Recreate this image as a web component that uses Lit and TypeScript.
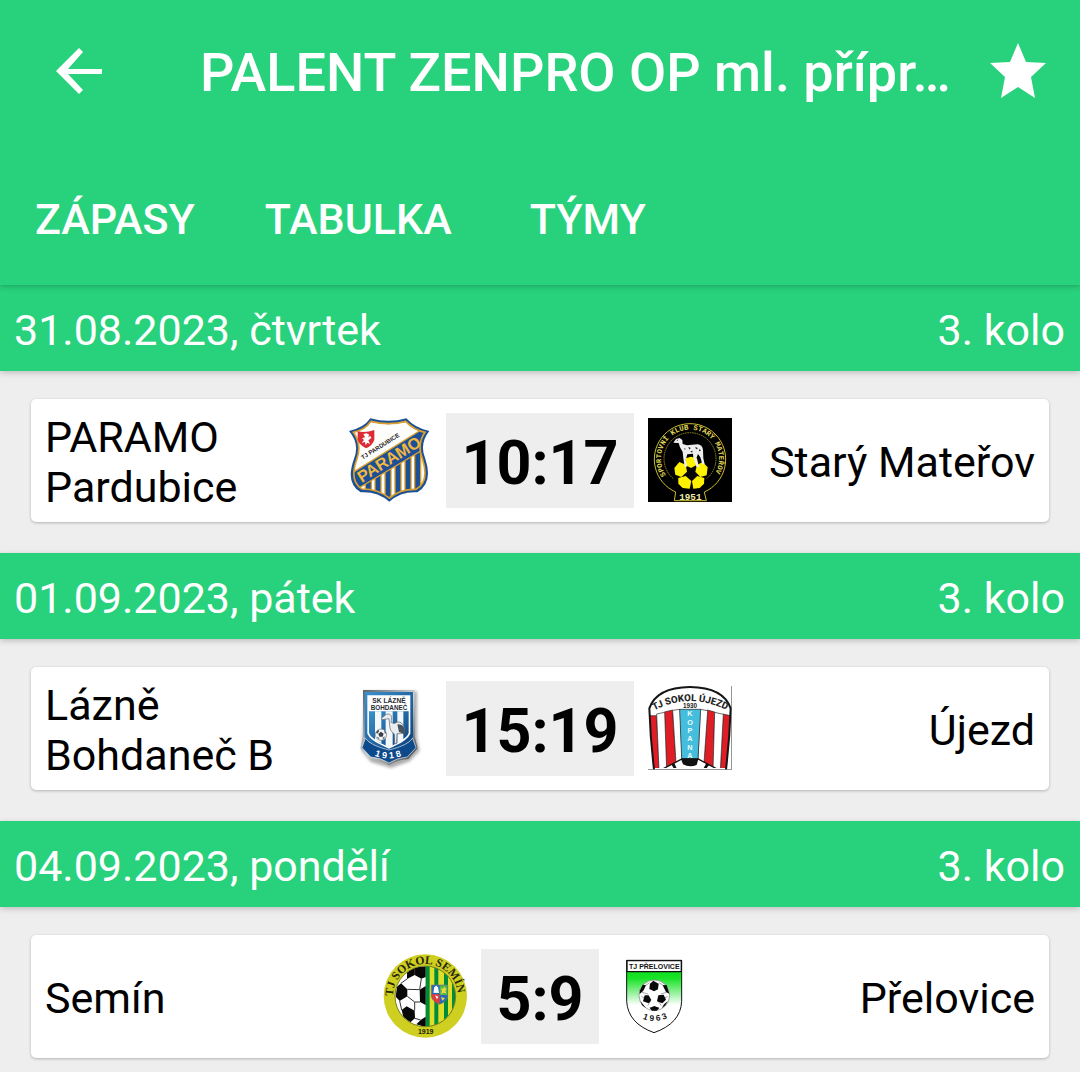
import { LitElement, html, svg, css, type SVGTemplateResult } from "lit";
import { customElement, property } from "lit/decorators.js";

interface Crest {
  viewBox: string;
  art: SVGTemplateResult;
}

interface Team {
  name: string;
  crest: Crest;
}

interface Match {
  date: string;
  round: string;
  home: Team;
  away: Team;
  score: string;
}

const paramo: Crest = {
  viewBox: "24 30 252 252",
  art: svg`
    <defs>
      <clipPath id="paramo-shield">
        <path d="M93 42Q146 55 197 42Q220 66 253 73Q229 110 248 155Q269 222 228 244Q180 243 148 270Q115 243 66 243Q27 220 50 155Q67 110 40 73Q75 66 93 42Z" />
      </clipPath>
    </defs>
    <path fill="#1d4f96" d="M91 31Q146 46 199 31Q225 60 268 69Q237 108 256 152Q280 226 232 253Q183 250 148 281Q112 250 62 253Q15 226 42 152Q60 108 27 69Q72 59 91 31Z" />
    <g clip-path="url(#paramo-shield)">
      <rect x="20" y="30" width="260" height="260" fill="#fdfdfb" />
      <path fill="#1d4f96" stroke="#d9a02f" stroke-width="4" d="M76 210h18v60h-18zM105 190h18v80h-18zM135 175h18v110h-18zM165 155h18v120h-18zM195 140h18v120h-18zM224 120h18v130h-18z" />
      <path fill="#1d4f96" stroke="#d9a02f" stroke-width="4" d="M36 195L256 58L258 120L40 250Z" />
    </g>
    <path fill="none" stroke="#d9a02f" stroke-width="5" d="M93 40Q146 54 197 40Q220 65 255 73Q229 110 248 155Q269 222 228 244Q180 243 148 270Q115 243 66 243Q27 220 50 155Q67 110 40 73Q75 66 93 40Z" />
    <path fill="#dc2b35" d="M53 70Q77 75 103 66V95Q98 112 78 121Q56 110 53 94Z" />
    <path fill="#fff" d="M70 78L80 76L88 80L84 87L91 84L94 90L85 97L90 108L82 104L77 112L75 102L65 104L72 96L66 91L75 88Z" />
    <text transform="translate(68 155) rotate(-32)" font-size="18" font-weight="700" fill="#222">TJ PARDUBICE</text>
    <text transform="translate(65 225) rotate(-32)" font-size="49" font-weight="900" fill="#f2b83c">PARAMO</text>
  `,
};

const materov: Crest = {
  viewBox: "24 30 252 252",
  art: svg`
    <rect x="24" y="30" width="252" height="252" fill="#000" />
    <path fill="none" stroke="#cabf2c" stroke-width="3" d="M107 252A107 107 0 1 1 193 252M107 252L103 278H199L193 252" />
    <path fill="none" stroke="#cabf2c" stroke-width="2" stroke-dasharray="5 2" d="M100 212A78 78 0 1 1 200 212" />
    <path id="materov-ring" fill="none" d="M79 202A87 87 0 1 1 221 202" />
    <text class="mono" font-size="22" font-weight="700" fill="#e0d85a"><textPath href="#materov-ring" startOffset="1">SPORTOVNÍ KLUB STARÝ MATEŘOV</textPath></text>
    <circle cx="153" cy="195" r="48" fill="#080808" />
    <g fill="#fff200">
      <path d="M153 146L171 151L174 169L153 180L134 170L137 151Z" />
      <path d="M103 180L118 162L137 170L141 191L124 207L106 200Z" />
      <path d="M203 178L188 162L171 171L166 191L181 207L200 202Z" />
      <path d="M115 210L137 204L154 219L149 242L128 240L115 227Z" />
      <path d="M193 210L172 204L156 219L160 242L179 240L192 227Z" />
    </g>
    <path fill="#eee" d="M100 104L108 93L119 90L127 96L128 108L141 112L172 109Q188 111 189 126L190 151L194 169L187 169L181 148L174 138L169 151L178 178L170 178L160 151L159 137L142 139L137 156L142 176L134 176L130 151L128 132L120 118L116 105Z" />
    <path fill="#222" d="M145 116l7 4-4 5zM166 116l8 5-6 3zM178 122l5 6-6 2zM151 130l7-2-2 6zM110 96l5-1-3 4zM132 121l5 1-2 4z" />
    <text class="mono" x="151" y="276" font-size="28" font-weight="700" text-anchor="middle" fill="#f1ecaa">1951</text>
  `,
};

const bohdanec: Crest = {
  viewBox: "9 30 252 252",
  art: svg`
    <defs>
      <linearGradient id="bohdanec-blue" x2="1" y2="1">
        <stop offset="0" stop-color="#3a91cc" />
        <stop offset="1" stop-color="#0b407d" />
      </linearGradient>
      <linearGradient id="bohdanec-rim" x2="1" y2="1">
        <stop offset="0" stop-color="#555e65" />
        <stop offset=".5" stop-color="#cbd0d3" />
        <stop offset="1" stop-color="#32393f" />
      </linearGradient>
      <filter id="bohdanec-shade"><feGaussianBlur stdDeviation="4" /></filter>
    </defs>
    <path fill="#777" opacity=".6" filter="url(#bohdanec-shade)" d="M60 46H216V185L224 225L194 256L138 276L78 258L50 225Z" />
    <path fill="url(#bohdanec-rim)" d="M54 42H209V181L218 217L190 249Q159 251 132 268Q106 251 74 249L46 217L54 181Z" />
    <path fill="url(#bohdanec-blue)" d="M59 48H204V181Q197 203 132 226Q66 203 59 181Z" />
    <path fill="#fff" d="M67 58H196V172Q190 194 132 218Q73 194 67 172Z" />
    <path fill="url(#bohdanec-blue)" d="M72 106H191V170Q185 190 132 212Q78 190 72 170Z" />
    <path fill="#f4f8fa" d="M90 106h19v96l-19-10zM122 106h21v103l-11 4-10-4zM157 106h18v86l-18 10z" />
    <text x="132" y="82" font-size="20" font-weight="700" text-anchor="middle" fill="#262c32">SK LÁZNĚ</text>
    <text x="132" y="101" font-size="19" font-weight="700" text-anchor="middle" fill="#262c32">BOHDANEČ</text>
    <path fill="#e9edef" stroke="#56616a" stroke-width="2" d="M109 127L124 115Q137 110 140 124L138 139Q146 146 158 138Q173 137 177 154L180 170L166 173L156 173L155 203H149L148 174Q134 165 134 148L132 128L111 131Z" />
    <path fill="#46525d" d="M157 145Q175 145 178 158L182 176L162 168Z" />
    <circle cx="108" cy="176" r="17" fill="#f6f6f6" stroke="#69747c" stroke-width="2" />
    <path fill="#38414a" d="M108 167l8 6-3 9h-10l-3-9zM93 170l6-8 4 2-6 9zM117 163l6 7-3 4zM95 183l5 1 4 7zM121 181l-6 8-3-3z" />
    <path fill="#0d4a8c" stroke="#dfe6ea" stroke-width="2" d="M61 187Q77 209 132 222Q187 209 203 187L213 215L187 243Q157 245 132 261Q107 245 77 243L51 215Z" />
    <path id="bohdanec-year" fill="none" d="M88 239Q132 257 180 236" />
    <text font-size="27" font-weight="700" fill="#fff"><textPath href="#bohdanec-year" startOffset="1">1 9 1 8</textPath></text>
  `,
};

const ujezd: Crest = {
  viewBox: "24 30 252 252",
  art: svg`
    <defs>
      <clipPath id="ujezd-shape">
        <path d="M42 276Q31 190 28 97Q50 34 150 33Q250 34 272 97Q269 190 258 276Z" />
      </clipPath>
    </defs>
    <rect x="24" y="30" width="252" height="252" fill="#fff" />
    <g clip-path="url(#ujezd-shape)">
      <rect x="24" y="30" width="252" height="252" fill="#fff" />
      <g stroke="#252525" stroke-width="2">
        <path fill="#e01d25" d="M27 119H50L58 282H32ZM73 108L98 102L108 258L79 282ZM202 102L224 108L220 282L192 258ZM249 114L275 120L264 282H241Z" />
        <path fill="#fff" d="M50 114L74 109L80 282H57ZM98 103L120 100L126 248L108 260ZM181 100L203 104L192 260L174 248ZM224 109L250 115L241 282H219Z" />
        <path fill="#45bddd" d="M119 100H182L174 248H125Z" />
      </g>
      <path fill="#fff" stroke="#111" stroke-width="4" d="M62 282L126 249H174L237 282Z" />
      <path fill="#111" d="M123 249H175L170 267Q148 275 129 265ZM94 265l9-4 9 21h-8zM199 262l9 4-13 17h-8z" />
    </g>
    <path fill="none" stroke="#151515" stroke-width="6" d="M42 280Q31 190 28 97Q50 34 150 33Q250 34 272 97Q269 190 258 280" />
    <path fill="none" stroke="#444" stroke-width="2" d="M275 30V281H24" />
    <path id="ujezd-arc" fill="none" d="M42 104Q150 46 264 104" />
    <text class="sans" font-size="29" font-weight="800" fill="#222"><textPath href="#ujezd-arc" startOffset="1">TJ SOKOL ÚJEZD</textPath></text>
    <text x="150" y="97" font-size="19" font-weight="800" text-anchor="middle" fill="#222">1930</text>
    <g font-size="22" font-weight="700" text-anchor="middle" fill="#e8fcff">
      <text x="150" y="121">K</text>
      <text x="150" y="146">O</text>
      <text x="150" y="171">P</text>
      <text x="150" y="196">A</text>
      <text x="150" y="221">N</text>
      <text x="150" y="246">A</text>
    </g>
  `,
};

const semin: Crest = {
  viewBox: "24 30 252 252",
  art: svg`
    <defs>
      <clipPath id="semin-disc"><circle cx="151" cy="157" r="90" /></clipPath>
    </defs>
    <circle cx="151" cy="156" r="125" fill="#cfcf22" />
    <g clip-path="url(#semin-disc)">
      <path fill="#fff" d="M60 60h92v190H60z" />
      <path fill="#008c3b" d="M152 60h92v190h-92z" />
      <path fill="#e1de29" d="M164 60h14v190h-14zM190 60h17v190h-17zM219 60h12v190h-12z" />
      <g fill="#080808">
        <path d="M96 82L121 70L152 67V99L139 104L119 93L96 105Z" />
        <path d="M66 128L78 118L97 136L97 157L74 171L62 158Z" />
        <path d="M134 137L152 126V183L135 174Z" />
        <path d="M80 198L95 187L119 200L120 223L106 235L85 220Z" />
        <path d="M137 228L152 218V250L124 241Z" />
      </g>
      <path fill="none" stroke="#333" stroke-width="3" d="M96 105L78 118M139 104L134 137L97 136M97 157L119 174L135 174M119 174L119 200M74 171L80 198M120 223L137 228M119 93V75" />
    </g>
    <circle cx="151" cy="157" r="91" fill="none" stroke="#565e18" stroke-width="2" />
    <path fill="#2868bb" stroke="#777" stroke-width="2" d="M169 123H218V157Q216 172 194 181Q172 172 169 157Z" />
    <path fill="#51b943" d="M194 124H217V153H194Z" />
    <path fill="#e33b3c" d="M170 151H194V180Q172 172 170 157Z" />
    <path fill="#fff" d="M175 146l3-17 6-4 5 5 3 17zM180 154l10 4-4 8z" />
    <path fill="#f2d83c" d="M198 131l6 4 4-9 2 8 5-2-4 10 3 6-9-2-7 5 3-10zM198 159l12 4-8 7z" />
    <path id="semin-arc" fill="none" d="M54 157A97 97 0 0 1 248 157V175" />
    <text class="serif" font-size="35" font-weight="700" fill="#25260c"><textPath href="#semin-arc" startOffset="0">TJ SOKOL SEMÍN</textPath></text>
    <text x="152" y="269" font-size="21" font-weight="700" text-anchor="middle" fill="#171704">1919</text>
  `,
};

const prelovice: Crest = {
  viewBox: "9 30 252 252",
  art: svg`
    <defs>
      <linearGradient id="prelovice-green" x2="0" y2="1">
        <stop offset="0" stop-color="#05dc14" />
        <stop offset=".25" stop-color="#18e227" />
        <stop offset=".62" stop-color="#fff" />
      </linearGradient>
    </defs>
    <path fill="url(#prelovice-green)" stroke="#111" stroke-width="3" d="M50 49H215V172Q212 238 132 266Q54 238 50 172Z" />
    <path fill="#fff" stroke="#111" stroke-width="4" d="M51 50H214V83H51Z" />
    <text x="133" y="75" font-size="21" font-weight="900" text-anchor="middle" fill="#111">TJ PŘELOVICE</text>
    <circle cx="133" cy="154" r="46" fill="#fff" stroke="#777" stroke-width="2" />
    <path fill="none" stroke="#777" stroke-width="2" d="M133 136V121M114 150L96 145M152 150L170 145M122 171L113 185M144 171L154 185M104 126L119 116M147 116L162 126M94 157L104 163M162 163L173 157M119 191H147" />
    <g fill="#090909">
      <path d="M120 119L130 110L146 119L144 136L132 142L118 135Z" />
      <path d="M104 154L116 154L124 168L116 178L99 172Z" />
      <path d="M145 154L161 152L168 167L157 178L141 172Z" />
      <path d="M90 139L98 122L108 124L100 140L89 150Z" />
      <path d="M158 124L170 123L178 149L168 144Z" />
      <path d="M119 192L133 186L148 192L140 200H126Z" />
      <path d="M91 171L98 180L108 192L96 184ZM174 171L166 184L155 193L162 181Z" />
    </g>
    <path id="prelovice-year" fill="none" d="M96 223Q133 241 178 220" />
    <text font-size="25" font-weight="800" fill="#151515"><textPath href="#prelovice-year" startOffset="2">1 9 6 3</textPath></text>
  `,
};

const matches: Match[] = [
  {
    date: "31.08.2023, čtvrtek",
    round: "3. kolo",
    home: { name: "PARAMO Pardubice", crest: paramo },
    away: { name: "Starý Mateřov", crest: materov },
    score: "10:17",
  },
  {
    date: "01.09.2023, pátek",
    round: "3. kolo",
    home: { name: "Lázně Bohdaneč B", crest: bohdanec },
    away: { name: "Újezd", crest: ujezd },
    score: "15:19",
  },
  {
    date: "04.09.2023, pondělí",
    round: "3. kolo",
    home: { name: "Semín", crest: semin },
    away: { name: "Přelovice", crest: prelovice },
    score: "5:9",
  },
];

@customElement("team-crest")
export class TeamCrest extends LitElement {
  @property({ attribute: false }) crest!: Crest;

  static styles = css`
    :host {
      display: block;
      flex: none;
      padding-bottom: 2px;
    }
    .crest {
      display: block;
      width: 84px;
      height: 84px;
      font-family: "Liberation Sans", Roboto, sans-serif;
    }
    .serif {
      font-family: "Liberation Serif", serif;
    }
    .mono {
      font-family: "Liberation Mono", monospace;
    }
    .sans {
      font-family: Roboto, sans-serif;
    }
  `;

  render() {
    return html`<svg class="crest" viewBox=${this.crest.viewBox} aria-hidden="true">${this.crest.art}</svg>`;
  }
}

@customElement("match-day")
export class MatchDay extends LitElement {
  @property({ attribute: false }) match!: Match;

  static styles = css`
    :host {
      display: block;
    }
    .day {
      display: flex;
      justify-content: space-between;
      align-items: center;
      box-sizing: border-box;
      min-height: 86px;
      padding: 4px 15px 0 14px;
      background: #28d17c;
      color: #fff;
      box-shadow: 0 2px 6px rgba(0, 0, 0, 0.2);
    }
    .date,
    .round {
      margin: 0;
      font-size: 43px;
      font-weight: 400;
      line-height: 50px;
    }
    .card {
      display: grid;
      grid-template-columns: 1fr auto 1fr;
      align-items: center;
      gap: 14px;
      box-sizing: border-box;
      min-height: 123px;
      margin: 28px 31px 31px;
      padding: 0 14px;
      border-radius: 5px;
      background: #fff;
      color: #000;
      box-shadow: 0 1px 3px rgba(0, 0, 0, 0.25);
    }
    .side {
      display: flex;
      align-items: center;
      justify-content: space-between;
      gap: 14px;
    }
    .name {
      margin: 0;
      padding-top: 2px;
      font-size: 43px;
      line-height: 50px;
    }
    .away {
      text-align: right;
    }
    .score {
      margin: 0;
      padding: 6px 15px 0;
      background: #eee;
      font-size: 61px;
      font-weight: 700;
      line-height: 89px;
    }
  `;

  render() {
    const { date, round, home, away, score } = this.match;
    return html`
      <section>
        <header class="day">
          <h2 class="date">${date}</h2>
          <p class="round">${round}</p>
        </header>
        <article class="card">
          <div class="side">
            <p class="name">${home.name}</p>
            <team-crest .crest=${home.crest}></team-crest>
          </div>
          <p class="score">${score}</p>
          <div class="side">
            <team-crest .crest=${away.crest}></team-crest>
            <p class="name away">${away.name}</p>
          </div>
        </article>
      </section>
    `;
  }
}

@customElement("app-root")
export class AppRoot extends LitElement {
  static styles = css`
    :host {
      display: block;
      min-height: 100vh;
      background: #eee;
      font-family: Roboto, "Noto Sans", sans-serif;
    }
    .top {
      position: relative;
      background: #28d17c;
      color: #fff;
      box-shadow: 0 1px 6px rgba(0, 0, 0, 0.25);
    }
    .bar {
      display: flex;
      align-items: center;
      min-height: 144px;
      padding: 0 26px 0 44px;
    }
    .icon-button {
      flex: none;
      padding: 0;
      border: 0;
      background: none;
      color: inherit;
    }
    .icon {
      display: block;
      width: 72px;
      height: 72px;
      fill: currentColor;
    }
    .title {
      flex: 1;
      min-width: 0;
      margin: 0 16px 0 84px;
      padding-top: 2px;
      overflow: hidden;
      font-size: 54px;
      font-weight: 500;
      line-height: 72px;
      white-space: nowrap;
      text-overflow: ellipsis;
    }
    .tabs {
      display: flex;
      padding: 45px 0 36px;
    }
    .tab {
      min-width: 202px;
      padding: 0 35px;
      border: 0;
      background: none;
      color: inherit;
      font: inherit;
      font-size: 43px;
      font-weight: 500;
      line-height: 60px;
    }
  `;

  render() {
    return html`
      <header class="top">
        <div class="bar">
          <button class="icon-button" type="button" aria-label="Zpět">
            <svg class="icon" viewBox="0 0 72 72" aria-hidden="true">
              <path d="M58 33V38H24L39 54L35 58L12 35L35 12L39 16L24 33Z" />
            </svg>
          </button>
          <h1 class="title">PALENT ZENPRO OP ml. přípr…</h1>
          <button class="icon-button" type="button" aria-label="Oblíbené">
            <svg class="icon" viewBox="0 0 72 72" aria-hidden="true">
              <path d="M36 7L44 26L64 27L49 41L53 62L36 51L19 62L23 41L8 27L28 26Z" />
            </svg>
          </button>
        </div>
        <nav class="tabs" aria-label="Soutěž">
          <button class="tab" type="button">ZÁPASY</button>
          <button class="tab" type="button">TABULKA</button>
          <button class="tab" type="button">TÝMY</button>
        </nav>
      </header>
      <main>${matches.map((match) => html`<match-day .match=${match}></match-day>`)}</main>
    `;
  }
}
